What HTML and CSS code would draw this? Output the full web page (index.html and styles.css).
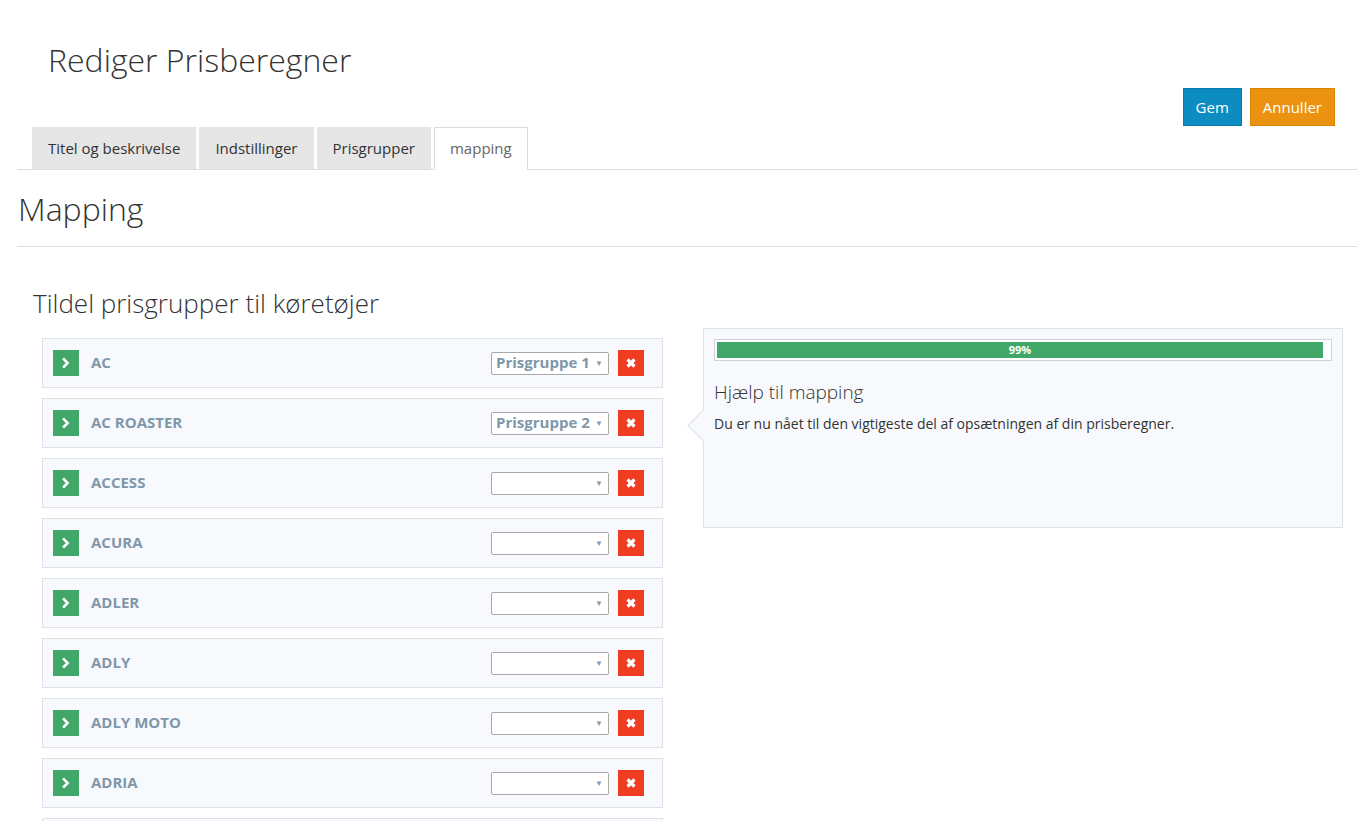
FILE: index.html
```html
<!DOCTYPE html>
<html lang="da">
<head>
<meta charset="utf-8">
<title>Rediger Prisberegner</title>
<link rel="stylesheet" href="styles.css">
</head>
<body>
<div class="page">
  <header class="head">
    <h1 class="page-title">Rediger Prisberegner</h1>
    <div class="toolbar">
      <button class="btn btn-save">Gem</button>
      <button class="btn btn-cancel">Annuller</button>
    </div>
    <nav class="tabs">
      <span class="tab">Titel og beskrivelse</span>
      <span class="tab">Indstillinger</span>
      <span class="tab">Prisgrupper</span>
      <span class="tab active">mapping</span>
    </nav>
  </header>

  <h2 class="section-title">Mapping</h2>
  <hr class="rule">

  <div class="mapping">
    <div class="left">
      <h3 class="sub-title">Tildel prisgrupper til køretøjer</h3>
      <ul class="rows">
        <li class="row">
          <span class="go"><svg viewBox="0 0 12 12" width="12" height="12"><path d="M4 2.3 L7.6 6 L4 9.7" fill="none" stroke="#fff" stroke-width="2.6" stroke-linecap="square"/></svg></span>
          <span class="name">AC</span>
          <span class="select"><span class="val">Prisgruppe 1</span><span class="caret">▼</span></span>
          <span class="del"><svg viewBox="0 0 12 12" width="12" height="12"><path d="M2.5 2.5 L9.5 9.5 M9.5 2.5 L2.5 9.5" stroke="#fff" stroke-width="3.2"/></svg></span>
        </li>
        <li class="row">
          <span class="go"><svg viewBox="0 0 12 12" width="12" height="12"><path d="M4 2.3 L7.6 6 L4 9.7" fill="none" stroke="#fff" stroke-width="2.6" stroke-linecap="square"/></svg></span>
          <span class="name">AC ROASTER</span>
          <span class="select"><span class="val">Prisgruppe 2</span><span class="caret">▼</span></span>
          <span class="del"><svg viewBox="0 0 12 12" width="12" height="12"><path d="M2.5 2.5 L9.5 9.5 M9.5 2.5 L2.5 9.5" stroke="#fff" stroke-width="3.2"/></svg></span>
        </li>
        <li class="row">
          <span class="go"><svg viewBox="0 0 12 12" width="12" height="12"><path d="M4 2.3 L7.6 6 L4 9.7" fill="none" stroke="#fff" stroke-width="2.6" stroke-linecap="square"/></svg></span>
          <span class="name">ACCESS</span>
          <span class="select"><span class="val"></span><span class="caret">▼</span></span>
          <span class="del"><svg viewBox="0 0 12 12" width="12" height="12"><path d="M2.5 2.5 L9.5 9.5 M9.5 2.5 L2.5 9.5" stroke="#fff" stroke-width="3.2"/></svg></span>
        </li>
        <li class="row">
          <span class="go"><svg viewBox="0 0 12 12" width="12" height="12"><path d="M4 2.3 L7.6 6 L4 9.7" fill="none" stroke="#fff" stroke-width="2.6" stroke-linecap="square"/></svg></span>
          <span class="name">ACURA</span>
          <span class="select"><span class="val"></span><span class="caret">▼</span></span>
          <span class="del"><svg viewBox="0 0 12 12" width="12" height="12"><path d="M2.5 2.5 L9.5 9.5 M9.5 2.5 L2.5 9.5" stroke="#fff" stroke-width="3.2"/></svg></span>
        </li>
        <li class="row">
          <span class="go"><svg viewBox="0 0 12 12" width="12" height="12"><path d="M4 2.3 L7.6 6 L4 9.7" fill="none" stroke="#fff" stroke-width="2.6" stroke-linecap="square"/></svg></span>
          <span class="name">ADLER</span>
          <span class="select"><span class="val"></span><span class="caret">▼</span></span>
          <span class="del"><svg viewBox="0 0 12 12" width="12" height="12"><path d="M2.5 2.5 L9.5 9.5 M9.5 2.5 L2.5 9.5" stroke="#fff" stroke-width="3.2"/></svg></span>
        </li>
        <li class="row">
          <span class="go"><svg viewBox="0 0 12 12" width="12" height="12"><path d="M4 2.3 L7.6 6 L4 9.7" fill="none" stroke="#fff" stroke-width="2.6" stroke-linecap="square"/></svg></span>
          <span class="name">ADLY</span>
          <span class="select"><span class="val"></span><span class="caret">▼</span></span>
          <span class="del"><svg viewBox="0 0 12 12" width="12" height="12"><path d="M2.5 2.5 L9.5 9.5 M9.5 2.5 L2.5 9.5" stroke="#fff" stroke-width="3.2"/></svg></span>
        </li>
        <li class="row">
          <span class="go"><svg viewBox="0 0 12 12" width="12" height="12"><path d="M4 2.3 L7.6 6 L4 9.7" fill="none" stroke="#fff" stroke-width="2.6" stroke-linecap="square"/></svg></span>
          <span class="name">ADLY MOTO</span>
          <span class="select"><span class="val"></span><span class="caret">▼</span></span>
          <span class="del"><svg viewBox="0 0 12 12" width="12" height="12"><path d="M2.5 2.5 L9.5 9.5 M9.5 2.5 L2.5 9.5" stroke="#fff" stroke-width="3.2"/></svg></span>
        </li>
        <li class="row">
          <span class="go"><svg viewBox="0 0 12 12" width="12" height="12"><path d="M4 2.3 L7.6 6 L4 9.7" fill="none" stroke="#fff" stroke-width="2.6" stroke-linecap="square"/></svg></span>
          <span class="name">ADRIA</span>
          <span class="select"><span class="val"></span><span class="caret">▼</span></span>
          <span class="del"><svg viewBox="0 0 12 12" width="12" height="12"><path d="M2.5 2.5 L9.5 9.5 M9.5 2.5 L2.5 9.5" stroke="#fff" stroke-width="3.2"/></svg></span>
        </li>
        <li class="row row-partial"></li>
      </ul>
    </div>
    <aside class="help">
      <div class="progress"><div class="bar" style="width:99%">99%</div></div>
      <h4 class="help-title">Hjælp til mapping</h4>
      <p class="help-text">Du er nu nået til den vigtigeste del af opsætningen af din prisberegner.</p>
    </aside>
  </div>
</div>
</body>
</html>
```

FILE: styles.css
```css
* { box-sizing: border-box; }
html, body { margin: 0; padding: 0; background: #fff; }
body {
  font-family: "Open Sans", "Noto Sans", "Liberation Sans", sans-serif;
  color: #333;
  overflow: hidden;
  height: 821px;
}
.page { padding: 0 14px 0 17px; }

.head { display: flex; flex-direction: column; }
.page-title {
  margin: 39px 0 0 31px;
  font-size: 32px;
  line-height: 41px;
  font-weight: 300;
  color: #333;
}
.toolbar {
  display: flex;
  justify-content: flex-end;
  gap: 8px;
  margin-top: 8px;
  padding-right: 22px;
}
.btn {
  font-family: inherit;
  font-size: 15px;
  color: #fff;
  height: 38px;
  padding: 0 12px;
  border: 1px solid transparent;
  border-radius: 0;
  cursor: pointer;
}
.btn-save { background: #0c8cc1; border-color: #0a7aa9; padding: 0 12px; }
.btn-cancel { background: #eb9211; border-color: #d88505; }

.tabs {
  display: flex;
  gap: 3px;
  margin-top: 1px;
  padding-left: 15px;
  border-bottom: 1px solid #dcdcdc;
  height: 43px;
}
.tab {
  background: #e6e6e6;
  font-size: 15px;
  line-height: 20px;
  padding: 11px 16px 11px;
  height: 42px;
  color: #333;
}
.tab.active {
  background: #fff;
  border: 1px solid #dcdcdc;
  border-bottom-color: #fff;
  height: 43px;
  color: #666;
  padding: 10px 15px 11px;
}

.section-title {
  margin: 18px 0 0 1px;
  font-size: 32px;
  line-height: 41px;
  font-weight: 300;
  color: #333;
}
.rule {
  margin: 17px 0 0 0;
  border: 0;
  border-top: 1px solid #dedede;
  height: 0;
}

.mapping {
  display: flex;
  align-items: flex-start;
  margin-top: 40px;
}
.left { width: 646px; padding-left: 16px; }
.sub-title {
  margin: 0;
  font-size: 26px;
  line-height: 33px;
  font-weight: 300;
  color: #333;
}
.rows {
  list-style: none;
  margin: 18px 0 0 9px;
  padding: 0;
  display: flex;
  flex-direction: column;
  gap: 10px;
}
.row {
  display: flex;
  align-items: center;
  height: 50px;
  width: 621px;
  padding: 0 18px 0 10px;
  background: #f8f9fd;
  border: 1px solid #dde2e9;
}
.go, .del {
  width: 26px;
  height: 26px;
  display: flex;
  align-items: center;
  justify-content: center;
  flex: none;
}
.go { background: #40a768; }
.del { background: #ef3c23; margin-left: 9px; }
.name {
  margin-left: 12px;
  flex: 1;
  font-size: 15px;
  line-height: 20px;
  padding-bottom: 3px;
  font-weight: 700;
  color: #7f97ab;
}
.select {
  width: 118px;
  height: 23px;
  background: #fff;
  border: 1px solid #a9a9a9;
  border-radius: 2px;
  display: flex;
  align-items: center;
  padding: 0 4px 2px 4px;
}
.val {
  flex: 1;
  font-size: 15px;
  font-weight: 700;
  color: #7f97ab;
  line-height: 20px;
  white-space: nowrap;
}
.caret {
  font-size: 8px;
  color: #8a9aaa;
  margin-right: 1px;
}

.help {
  position: relative;
  margin: 41px 0 0 40px;
  width: 640px;
  height: 200px;
  background: #f8f9fd;
  border: 1px solid #dde2e9;
  padding: 10px 10px 0 10px;
}
.help::before {
  content: "";
  position: absolute;
  left: -12px;
  top: 85px;
  width: 22px;
  height: 22px;
  background: #f8f9fd;
  border-left: 1px solid #dde2e9;
  border-bottom: 1px solid #dde2e9;
  transform: rotate(45deg);
}
.progress {
  height: 22px;
  border: 1px solid #cfd3d8;
  background: #fff;
  padding: 2px;
  width: 618px;
}
.bar {
  height: 100%;
  background: #40a768;
  color: #fff;
  font-size: 11px;
  font-weight: 700;
  line-height: 16px;
  text-align: center;
}
.help-title {
  position: relative;
  margin: 19px 0 0 0;
  font-size: 19px;
  line-height: 25px;
  font-weight: 300;
  color: #333;
}
.help-text {
  position: relative;
  margin: 9px 0 0 0;
  font-size: 14px;
  line-height: 20px;
  color: #333;
}
```
